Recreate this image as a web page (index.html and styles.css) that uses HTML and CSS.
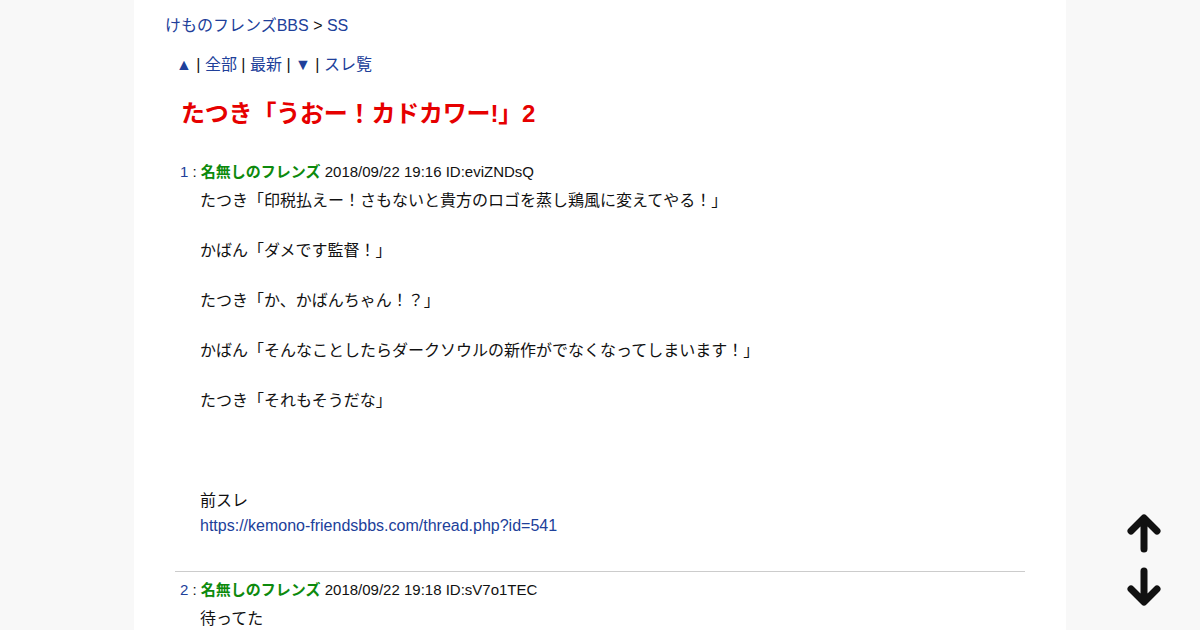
FILE: index.html
```html
<!DOCTYPE html>
<html lang="ja">
<head>
    <meta charset="UTF-8">
    <meta name="viewport" content="width=device-width, initial-scale=1.0">
    <title>たつき「うおー！カドカワー!」2 - けものフレンズBBS</title>
    <link rel="stylesheet" href="styles.css">
</head>
<body>
    <div class="wrapper">
        <!-- Breadcrumb -->
        <div class="breadcrumb">
            <a href="#">けものフレンズBBS</a> &gt; <a href="#">SS</a>
        </div>

        <!-- Thread navigation -->
        <div class="thread-nav">
            <a href="#">▲</a> | <a href="#">全部</a> | <a href="#">最新</a> | <a href="#">▼</a> | <a href="#">スレ覧</a>
        </div>

        <h1 class="thread-title">たつき「うおー！カドカワー!」2</h1>

        <div class="posts">
            <div class="post">
                <div class="post-head">
                    <span class="post-num">1</span> : <span class="post-name">名無しのフレンズ</span> 2018/09/22 19:16 ID:eviZNDsQ
                </div>
                <div class="post-body">
                    たつき「印税払えー！さもないと貴方のロゴを蒸し鶏風に変えてやる！」<br>
                    <br>
                    かばん「ダメです監督！」<br>
                    <br>
                    たつき「か、かばんちゃん！？」<br>
                    <br>
                    かばん「そんなことしたらダークソウルの新作がでなくなってしまいます！」<br>
                    <br>
                    たつき「それもそうだな」<br>
                    <br>
                    <br>
                    <br>
                    前スレ<br>
                    <a href="#">https://kemono-friendsbbs.com/thread.php?id=541</a>
                </div>
            </div>

            <div class="post">
                <div class="post-head">
                    <span class="post-num">2</span> : <span class="post-name">名無しのフレンズ</span> 2018/09/22 19:18 ID:sV7o1TEC
                </div>
                <div class="post-body">
                    待ってた
                </div>
            </div>
        </div>
    </div>

    <!-- Scroll buttons -->
    <div class="scroll-buttons">
        <a href="#" class="scroll-btn">
            <svg width="36" height="40" viewBox="0 0 36 40"><path d="M18 35V5M5 17L18 4L31 17" fill="none" stroke="#111" stroke-width="7" stroke-linecap="round" stroke-linejoin="round"/></svg>
        </a>
        <a href="#" class="scroll-btn">
            <svg width="36" height="40" viewBox="0 0 36 40"><path d="M18 5V35M5 23L18 36L31 23" fill="none" stroke="#111" stroke-width="7" stroke-linecap="round" stroke-linejoin="round"/></svg>
        </a>
    </div>
</body>
</html>
```

FILE: styles.css
```css
* {
    margin: 0;
    padding: 0;
    box-sizing: border-box;
}

body {
    font-family: 'Liberation Sans', Arial, 'Noto Sans CJK JP', sans-serif;
    font-size: 16px;
    color: #111;
    background: #f8f8f8;
}

a {
    color: #20409a;
    text-decoration: none;
}

.wrapper {
    width: 932px;
    min-height: 100vh;
    margin: 0 auto;
    background: #fff;
    padding: 15px 41px 0 31px;
}

/* Header area */
.breadcrumb {
    line-height: 22px;
}

.thread-nav {
    margin: 17px 0 0 11px;
    line-height: 22px;
}

.thread-title {
    margin: 22px 0 0 16px;
    font-size: 24px;
    font-weight: bold;
    color: #e60000;
    line-height: 32px;
    letter-spacing: -0.2px;
}

/* Posts */
.posts {
    margin: 31px 0 0 10px;
}

.post {
    padding-bottom: 33px;
}

.post + .post {
    border-top: 1px solid #ccc;
    padding-top: 7px;
}

.post-head {
    font-size: 15px;
    line-height: 22px;
    padding-left: 5px;
}

.post-num {
    color: #20409a;
}

.post-name {
    color: #0d8a0d;
    font-weight: bold;
}

.post-body {
    margin: 5px 0 0 25px;
    line-height: 25px;
}

/* Scroll buttons */
.scroll-buttons {
    position: fixed;
    right: 38px;
    bottom: 24px;
    display: flex;
    flex-direction: column;
    gap: 12px;
}

.scroll-btn {
    display: block;
    width: 36px;
    height: 40px;
}
```
